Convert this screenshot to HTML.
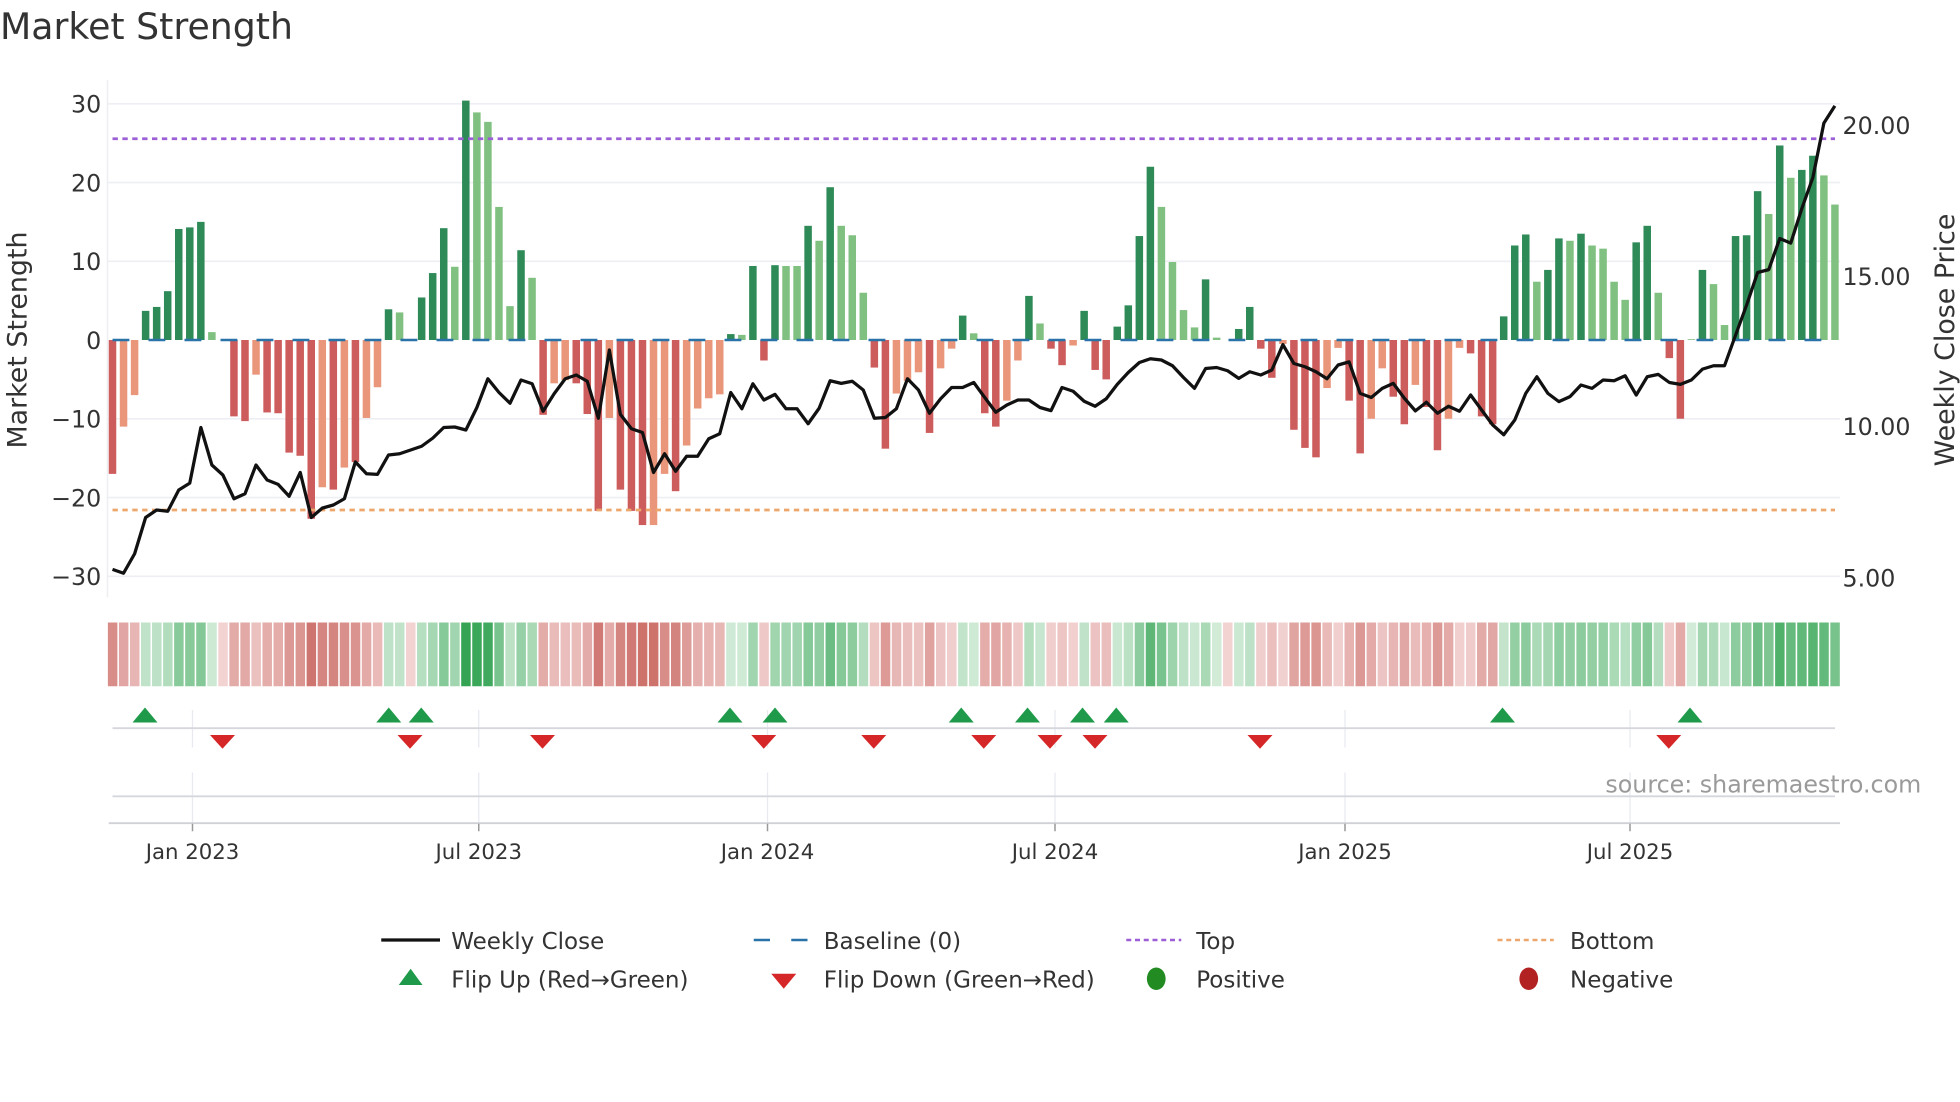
<!DOCTYPE html>
<html><head><meta charset="utf-8"><style>
html,body{margin:0;padding:0;background:#fff;width:1960px;height:1102px;overflow:hidden}
svg{display:block}
text{font-family:"DejaVu Sans","Liberation Sans",sans-serif;fill:#333}
</style></head><body>
<svg id="c" width="1960" height="1102" viewBox="0 0 1568 881.6" xmlns="http://www.w3.org/2000/svg">
<rect width="1568" height="881.6" fill="#fff"/>
<text x="0" y="31" font-size="29">Market Strength</text>
<g stroke="#edeff3" stroke-width="1.3">
<line x1="86" y1="83" x2="1472" y2="83"/><line x1="86" y1="146" x2="1472" y2="146"/>
<line x1="86" y1="209" x2="1472" y2="209"/><line x1="86" y1="335" x2="1472" y2="335"/>
<line x1="86" y1="398" x2="1472" y2="398"/><line x1="86" y1="461" x2="1472" y2="461"/>
<line x1="86" y1="64" x2="86" y2="478"/>
</g>
<g font-size="19" text-anchor="end">
<text x="81" y="90">30</text><text x="81" y="153">20</text><text x="81" y="216">10</text>
<text x="81" y="279">0</text><text x="81" y="342">−10</text><text x="81" y="405">−20</text><text x="81" y="468">−30</text>
</g>
<g font-size="19">
<text x="1474" y="107">20.00</text><text x="1474" y="228">15.00</text><text x="1474" y="348">10.00</text><text x="1474" y="469">5.00</text>
</g>
<text transform="translate(21,272) rotate(-90)" font-size="21.5" text-anchor="middle">Market Strength</text>
<text transform="translate(1563,272) rotate(-90)" font-size="21.5" text-anchor="middle">Weekly Close Price</text>
<g id="bars"></g>
<line x1="90" y1="111" x2="1468" y2="111" stroke="#9d5fd6" stroke-width="2.2" stroke-dasharray="4.3 3.6"/>
<line x1="90" y1="408" x2="1468" y2="408" stroke="#eda66b" stroke-width="2.2" stroke-dasharray="4.3 3.6"/>
<line x1="90" y1="272" x2="1468" y2="272" stroke="#2a73a8" stroke-width="2" stroke-dasharray="13.5 15.3"/>
<polyline id="price" fill="none" stroke="#111" stroke-width="2.6" stroke-linejoin="round"/>
<g id="strip"></g>
<g stroke="#e8eaf0" stroke-width="1"><line x1="154" y1="568" x2="154" y2="598"/><line x1="383" y1="568" x2="383" y2="598"/><line x1="614" y1="568" x2="614" y2="598"/><line x1="844" y1="568" x2="844" y2="598"/><line x1="1076" y1="568" x2="1076" y2="598"/><line x1="1304" y1="568" x2="1304" y2="598"/>
<line x1="154" y1="618" x2="154" y2="658"/><line x1="383" y1="618" x2="383" y2="658"/><line x1="614" y1="618" x2="614" y2="658"/><line x1="844" y1="618" x2="844" y2="658"/><line x1="1076" y1="618" x2="1076" y2="658"/><line x1="1304" y1="618" x2="1304" y2="658"/></g>
<line x1="90" y1="582.5" x2="1468" y2="582.5" stroke="#d5d7dd" stroke-width="1.5"/>
<line x1="90" y1="637" x2="1468" y2="637" stroke="#d5d7dd" stroke-width="1.5"/>
<line x1="87" y1="658.5" x2="1472" y2="658.5" stroke="#cfd1d6" stroke-width="1.5"/>
<g stroke="#999" stroke-width="1.2"><line x1="154" y1="659" x2="154" y2="665"/><line x1="383" y1="659" x2="383" y2="665"/><line x1="614" y1="659" x2="614" y2="665"/><line x1="844" y1="659" x2="844" y2="665"/><line x1="1076" y1="659" x2="1076" y2="665"/><line x1="1304" y1="659" x2="1304" y2="665"/></g>
<g id="tri"></g>
<text x="1537" y="634" font-size="19" text-anchor="end" style="fill:#9a9a9a">source: sharemaestro.com</text>
<g font-size="17" text-anchor="middle">
<text x="154" y="687">Jan 2023</text><text x="383" y="687">Jul 2023</text><text x="614" y="687">Jan 2024</text>
<text x="844" y="687">Jul 2024</text><text x="1076" y="687">Jan 2025</text><text x="1304" y="687">Jul 2025</text>
</g>
<g font-size="18.4">
<line x1="305" y1="752" x2="352" y2="752" stroke="#111" stroke-width="2.6"/>
<text x="361" y="759">Weekly Close</text>
<line x1="603" y1="752" x2="647" y2="752" stroke="#2a73a8" stroke-width="2" stroke-dasharray="13 17"/>
<text x="659" y="759">Baseline (0)</text>
<line x1="901" y1="752" x2="945" y2="752" stroke="#9d5fd6" stroke-width="2" stroke-dasharray="4 3"/>
<text x="957" y="759">Top</text>
<line x1="1198" y1="752" x2="1243" y2="752" stroke="#eda66b" stroke-width="2" stroke-dasharray="4 3"/>
<text x="1256" y="759">Bottom</text>
<polygon points="319,788 338,788 328.5,775" fill="#1f9a4a"/>
<text x="361" y="790">Flip Up (Red→Green)</text>
<polygon points="617,779 637,779 627,791" fill="#d62728"/>
<text x="659" y="790">Flip Down (Green→Red)</text>
<ellipse cx="925" cy="783" rx="7.5" ry="9" fill="#228b22"/>
<text x="957" y="790">Positive</text>
<ellipse cx="1223" cy="783" rx="7.5" ry="9" fill="#b22222"/>
<text x="1256" y="790">Negative</text>
</g>
</svg>
<script>
var V=[[-17,1],[-11,0],[-7,0],[3.7,1],[4.2,1],[6.2,1],[14.1,1],[14.3,1],[15,1],[1,0],[0,1],[-9.7,1],[-10.3,1],[-4.4,0],[-9.2,1],[-9.3,1],[-14.3,1],[-14.7,1],[-22.7,1],[-18.7,0],[-19,1],[-16.2,0],[-15.5,1],[-9.9,0],[-6,0],[3.9,1],[3.5,0],[0,1],[5.4,1],[8.5,1],[14.2,1],[9.3,0],[30.4,1],[28.9,0],[27.7,0],[16.9,0],[4.3,0],[11.4,1],[7.9,0],[-9.5,1],[-5.5,0],[-5.1,0],[-5.5,1],[-9.4,1],[-21.7,1],[-9.9,0],[-19,1],[-21.7,1],[-23.5,1],[-23.5,0],[-17,0],[-19.2,1],[-13.4,0],[-8.7,0],[-7.4,0],[-6.9,0],[0.75,1],[0.65,0],[9.4,1],[-2.6,1],[9.5,1],[9.4,0],[9.4,0],[14.5,1],[12.6,0],[19.4,1],[14.5,0],[13.3,0],[6,0],[-3.5,1],[-13.8,1],[-6.8,0],[-5.2,0],[-4.1,0],[-11.8,1],[-3.6,0],[-1.1,0],[3.1,1],[0.85,0],[-9.3,1],[-11,1],[-7.7,0],[-2.6,0],[5.6,1],[2.1,0],[-1.1,1],[-3.2,1],[-0.7,0],[3.7,1],[-3.8,1],[-5,1],[1.7,1],[4.4,1],[13.2,1],[22,1],[16.9,0],[9.9,0],[3.8,0],[1.6,0],[7.7,1],[0.3,0],[0,1],[1.4,1],[4.2,1],[-1.1,1],[-4.8,1],[-0.5,0],[-11.4,1],[-13.7,1],[-14.9,1],[-6.1,0],[-1,0],[-7.7,1],[-14.4,1],[-10,0],[-3.6,0],[-7.2,1],[-10.7,1],[-5.7,0],[-8.5,1],[-14,1],[-10,0],[-1,0],[-1.7,1],[-9.7,1],[-10.7,1],[3,1],[12,1],[13.4,1],[7.4,0],[8.9,1],[12.9,1],[12.6,0],[13.5,1],[12,0],[11.6,0],[7.4,0],[5.1,0],[12.4,1],[14.5,1],[6,0],[-2.3,1],[-10,1],[0.1,0],[8.9,1],[7.1,0],[1.9,0],[13.2,1],[13.3,1],[18.9,1],[16,0],[24.7,1],[20.6,0],[21.6,1],[23.4,1],[20.9,0],[17.2,0]];
var P=[455.5,458.6,443,414,408,409,392,386.5,342,372,380,399,395,372,384,387.5,397,378,414,406.5,404,399,369.5,379,379.5,364,363,360,357,350.5,342,341.6,344,326,303,314,322.6,304,307,329,315,303,300,305,334.6,280,331.5,343,346,378,363,377,365,365,351,347,314,327,307,320,315.5,327,327,339,326.6,304.6,306.7,305,312,334.6,334,327,303,312,330.6,319,310,310,306,318,329.8,324,320,320,326,328.5,310,313,321,325,319,307.5,298,290,287,288,292.6,302,310.7,294.8,294,296.6,302.7,297.4,300,296,275.7,290.8,293.4,297.4,303,292,289.5,314.7,318,310.7,306.7,318.6,328.7,321.8,330.6,325,329,316,328,339.9,347.8,336,314.7,301.4,314.7,321.3,317.3,308,310.7,304,304.6,300.6,316,301.4,299.5,306,307.5,304,295.3,292.6,292.6,268,244,218,215.7,190.8,194.5,167,142,98.5,84.7];
var NS="http://www.w3.org/2000/svg",S=8.833;
function el(t,a,p){var e=document.createElementNS(NS,t);for(var k in a)e.setAttribute(k,a[k]);p.appendChild(e);return e;}
var bars=document.getElementById('bars'),strip=document.getElementById('strip'),tri=document.getElementById('tri');
function mix(a,b,t){return 'rgb('+[0,1,2].map(function(i){return Math.round(a[i]+(b[i]-a[i])*t)}).join(',')+')';}
var pts=[];
for(var i=0;i<V.length;i++){
 var x=90+S*i,v=V[i][0],d=V[i][1];
 var y0=272,y1=272-v*6.3;
 var col=v>=0?(d?'#2e8a57':'#80c080'):(d?'#cd5c5c':'#e9967a');
 if(Math.abs(v)>0.05)el('rect',{x:x-3,y:Math.min(y0,y1),width:6,height:Math.abs(y1-y0),fill:col},bars);
 var t;
 if(v>0){t=Math.min(1,0.12+v/30*0.88);col=mix([232,245,234],[52,164,84],t);}
 else{t=Math.min(1,0.1+(-v)/24*0.9);col=mix([246,222,222],[205,112,106],t);}
 el('rect',{x:86.3+S*i,y:498,width:7.6,height:51,fill:col},strip);
 pts.push(x.toFixed(1)+','+P[i]);
}
document.getElementById('price').setAttribute('points',pts.join(' '));
[116,311,337,584,620,769,822,866,893,1202,1352].forEach(function(x){el('polygon',{points:(x-10)+',578 '+(x+10)+',578 '+x+',566',fill:'#1f9a4a'},tri);});
[178,328,434,611,699,787,840,876,1008,1335].forEach(function(x){el('polygon',{points:(x-10)+',588 '+(x+10)+',588 '+x+',599',fill:'#d62728'},tri);});
</script>
</body></html>
